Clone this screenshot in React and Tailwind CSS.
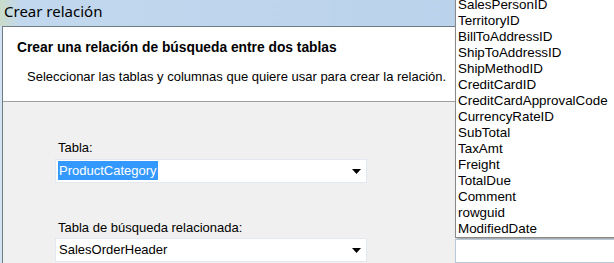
const columns = [
  "SalesPersonID",
  "TerritoryID",
  "BillToAddressID",
  "ShipToAddressID",
  "ShipMethodID",
  "CreditCardID",
  "CreditCardApprovalCode",
  "CurrencyRateID",
  "SubTotal",
  "TaxAmt",
  "Freight",
  "TotalDue",
  "Comment",
  "rowguid",
  "ModifiedDate",
];

const Arrow = () => (
  <svg width="9" height="5" viewBox="0 0 9 5" className="shrink-0">
    <path d="M0 0h9L4.5 5z" fill="#000" />
  </svg>
);

const ComboBox = ({ value, selected }) => (
  <div className="flex h-[24px] w-[312px] items-center border border-[#e2e8ee] bg-white pl-[2px] pr-[5px]">
    <div className="flex-1">
      <span
        className={
          selected
            ? "inline-block bg-[#3399ff] px-px leading-[19px] text-white"
            : "inline-block px-px leading-[19px] text-black"
        }
      >
        {value}
      </span>
    </div>
    <Arrow />
  </div>
);

export default function App() {
  return (
    <div className="relative h-[263px] w-[614px] overflow-hidden bg-[#d4e3f2] font-['Liberation_Sans',Arial,sans-serif] text-[13px]">
      <div className="flex h-[26px] items-start bg-[linear-gradient(90deg,#c9dcc9_0px,#c2d8ee_20px,#bcd3ec_60%,#b9d1eb_100%)] pl-[4px] pt-[1px] font-['Noto_Sans',sans-serif] text-[15px] leading-[20px] text-black">
        Crear relación
      </div>

      <div className="ml-[2px] border-l border-t border-[#6f7c86]">
        <div className="h-[75px] border-b border-[#a0a0a0] bg-white pl-[14px] pt-[13px]">
          <div className="text-[13.8px] font-bold leading-[16px] text-black">
            Crear una relación de búsqueda entre dos tablas
          </div>
          <div className="mt-[13px] pl-[10px] leading-[16px] text-black">
            Seleccionar las tablas y columnas que quiere usar para crear la relación.
          </div>
        </div>

        <div className="h-[200px] bg-[#f0f0f0] pl-[52px] pt-[38px]">
          <div className="pl-[3px] leading-[16px] text-black">Tabla:</div>
          <div className="mt-[3px]">
            <ComboBox value="ProductCategory" selected />
          </div>
          <div className="mt-[37px] pl-[3px] leading-[16px] text-black">
            Tabla de búsqueda relacionada:
          </div>
          <div className="mt-[2px]">
            <ComboBox value="SalesOrderHeader" />
          </div>
        </div>
      </div>

      <div className="absolute left-[455px] top-[-3px] w-[170px]">
        <div className="border-l border-b border-[#8a8a8a] bg-white pl-[2px] text-[13.4px] shadow-[2px_2px_3px_rgba(0,0,0,0.35)]">
          {columns.map((c) => (
            <div key={c} className="h-[16px] leading-[16px] text-[#000]">
              {c}
            </div>
          ))}
        </div>
        <div className="mt-[1px] h-[24px] border border-[#b8c8d8] bg-white" />
      </div>
    </div>
  );
}
